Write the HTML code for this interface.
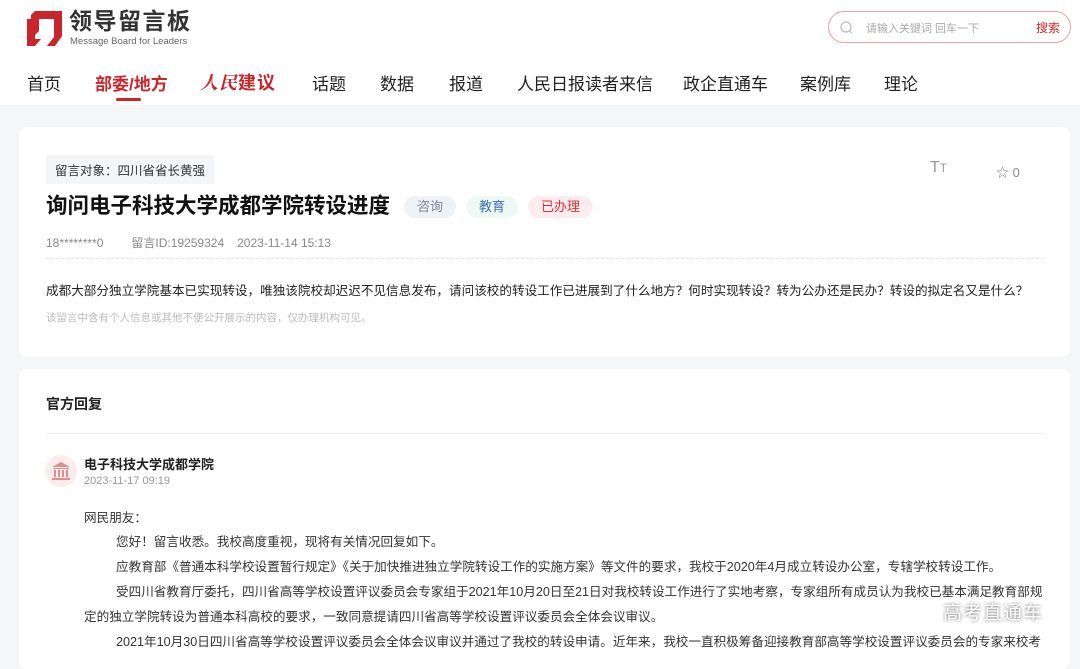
<!DOCTYPE html><html><head><meta charset="utf-8"><style>
*{margin:0;padding:0;box-sizing:border-box}
body{width:1080px;height:650px;overflow:hidden;background:#f5f6f8;font-family:"Liberation Sans","Noto Sans CJK SC",sans-serif;color:#222;position:relative}
.hdr{background:#fff;height:105px;position:relative}
.nav{position:absolute;top:70px;left:0;font-size:17px;color:#222}
.nav span{position:absolute;white-space:nowrap}
.card{position:absolute;left:19px;width:1051px;background:#fff;border-radius:8px}
.tag{display:inline-block;font-size:13px;font-weight:normal;height:22px;line-height:22px;padding:0 13px;border-radius:11px;vertical-align:middle;margin-left:10px}
.p{font-size:12.6px;color:#333;position:absolute;left:84px;white-space:nowrap}
</style></head><body>
<div class="hdr">
<svg style="position:absolute;left:27px;top:11px" width="35" height="35" viewBox="0 0 35 35"><path d="M8 0H35V25L28 35H20L27 26V8H12V20L4 28V4Z" fill="#c9262c"/><path d="M0 8H8V28L14 28 8 35H0Z" fill="#c9262c"/></svg>
<div style="position:absolute;left:69px;top:7px;font-size:23px;line-height:28px;font-weight:bold;color:#333;letter-spacing:1.5px">领导留言板</div>
<div style="position:absolute;left:70px;top:36px;font-size:9.5px;line-height:11px;color:#666">Message Board for Leaders</div>
<div style="position:absolute;left:828px;top:11px;width:243px;height:32px;border:1px solid #f0a0a4;border-radius:16px">
<svg style="position:absolute;left:11px;top:9px" width="13" height="13"><circle cx="6" cy="6" r="5" fill="none" stroke="#bbb" stroke-width="1.2"/><path d="M10 10l2 2" stroke="#bbb"/></svg>
<span style="position:absolute;left:37px;top:8px;font-size:11px;color:#aaa">请输入关键词 回车一下</span>
<span style="position:absolute;left:207px;top:7px;font-size:12px;color:#c9262c">搜索</span></div>
<div class="nav"><span style="left:27px">首页</span><span style="left:95px;color:#c9262c;font-weight:bold">部委/地方</span>
<span style="left:200px;color:#c9262c;font-weight:bold;font-size:18px;top:-1px;font-style:italic;font-family:'Noto Serif CJK SC',serif;letter-spacing:1px">人民<span style="position:static;font-style:normal;font-family:'Noto Sans CJK SC'">建议</span></span>
<span style="left:312px">话题</span><span style="left:380px">数据</span><span style="left:449px">报道</span><span style="left:517px">人民日报读者来信</span><span style="left:683px">政企直通车</span><span style="left:800px">案例库</span><span style="left:884px">理论</span></div>
<div style="position:absolute;left:116px;top:98px;width:25px;height:3px;background:#c9262c;border-radius:2px"></div>
</div>
<div class="card" style="top:127px;height:230px">
<div style="position:absolute;left:27px;top:28px;background:#f4f5f7;font-size:12.5px;color:#333;padding:5px 9px">留言对象：四川省省长黄强</div>
<div style="position:absolute;left:27px;top:62px;font-size:21.5px;font-weight:bold;color:#111;white-space:nowrap">询问电子科技大学成都学院转设进度<span class="tag" style="margin-left:14px;background:#eef1f6;color:#7a869a">咨询</span><span class="tag" style="background:#eef9f5;color:#3a6fc0">教育</span><span class="tag" style="background:#fcecee;color:#d0333b">已办理</span></div>
<div style="position:absolute;left:911px;top:32px;font-size:16px;color:#999">T<span style="font-size:12px">T</span></div>
<div style="position:absolute;left:977px;top:35px;font-size:13px;color:#888">☆ 0</div>
<div style="position:absolute;left:27px;top:107px;font-size:12px;color:#888;white-space:nowrap">18********0<span style="margin-left:28px">留言ID:19259324</span><span style="margin-left:13px">2023-11-14 15:13</span></div>
<div style="position:absolute;left:27px;top:131px;width:998px;border-top:1px dashed #e5e5e5"></div>
<div style="position:absolute;left:27px;top:153px;font-size:12.6px;color:#222;white-space:nowrap">成都大部分独立学院基本已实现转设，唯独该院校却迟迟不见信息发布，请问该校的转设工作已进展到了什么地方？何时实现转设？转为公办还是民办？转设的拟定名又是什么？</div>
<div style="position:absolute;left:27px;top:183px;font-size:10.5px;color:#bbb">该留言中含有个人信息或其他不便公开展示的内容，仅办理机构可见。</div>
</div>
<div class="card" style="top:369px;height:300px">
<div style="position:absolute;left:27px;top:25px;font-size:14px;font-weight:bold">官方回复</div>
<div style="position:absolute;left:27px;top:64px;width:998px;border-top:1px solid #eee"></div>
<div style="position:absolute;left:26px;top:86px;width:32px;height:32px;border-radius:50%;background:#fcecec">
<svg width="32" height="32" viewBox="0 0 32 32"><path d="M7 12L16 7 25 12Z M8 13H24V14H8Z M9 15H11V22H9Z M13 15H15V22H13Z M17 15H19V22H17Z M21 15H23V22H21Z M7 23H25V25H7Z" fill="#e28d8d"/></svg></div>
<div style="position:absolute;left:65px;top:85px;font-size:13px;font-weight:bold">电子科技大学成都学院</div>
<div style="position:absolute;left:65px;top:106px;font-size:11px;color:#999">2023-11-17 09:19</div>
</div>
<div class="p" style="top:507px">网民朋友：</div>
<div class="p" style="top:531px;left:116px">您好！留言收悉。我校高度重视，现将有关情况回复如下。</div>
<div class="p" style="top:556px;left:116px">应教育部《普通本科学校设置暂行规定》《关于加快推进独立学院转设工作的实施方案》等文件的要求，我校于2020年4月成立转设办公室，专辖学校转设工作。</div>
<div class="p" style="top:581px;left:116px">受四川省教育厅委托，四川省高等学校设置评议委员会专家组于2021年10月20日至21日对我校转设工作进行了实地考察，专家组所有成员认为我校已基本满足教育部规</div>
<div class="p" style="top:606px">定的独立学院转设为普通本科高校的要求，一致同意提请四川省高等学校设置评议委员会全体会议审议。</div>
<div class="p" style="top:631px;left:116px">2021年10月30日四川省高等学校设置评议委员会全体会议审议并通过了我校的转设申请。近年来，我校一直积极筹备迎接教育部高等学校设置评议委员会的专家来校考</div>
<div style="position:absolute;left:943px;top:598px;font-size:19px;color:#fff;text-shadow:0 0 3px rgba(0,0,0,.6);letter-spacing:1px">高考直通车</div>
</body></html>
